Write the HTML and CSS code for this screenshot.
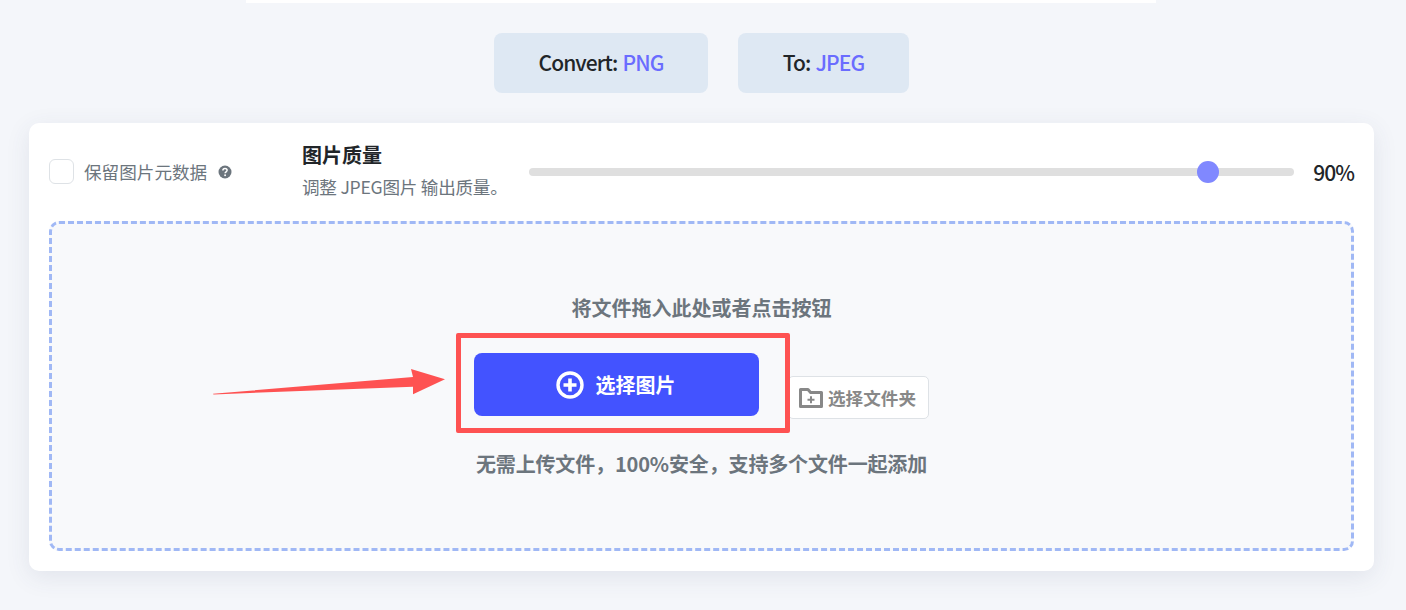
FILE: index.html
```html
<!DOCTYPE html>
<html lang="zh-CN">
<head>
<meta charset="utf-8">
<title>PNG to JPEG</title>
<link rel="stylesheet" href="styles.css">
</head>
<body>
<div class="top-strip"></div>
<div class="chips">
  <div class="chip chip-from">Convert: <span class="accent">PNG</span></div>
  <div class="chip chip-to">To: <span class="accent">JPEG</span></div>
</div>
<main class="card">
  <div class="settings">
    <label class="keep">
      <span class="checkbox"></span>
      <span class="keep-text">保留图片元数据</span>
      <svg class="help" viewBox="0 0 14 14" aria-hidden="true">
        <circle cx="7" cy="7" r="6.500" fill="#6c757d"/>
        <path d="M4.900 5.400C4.900 4.200 5.800 3.500 7 3.500s2.100.7 2.100 1.800c0 1.500-2 1.500-2 3" fill="none" stroke="#fff" stroke-width="1.500"/>
        <circle cx="7.100" cy="10.300" r=".95" fill="#fff"/>
      </svg>
    </label>
    <div class="quality">
      <div class="quality-title">图片质量</div>
      <div class="quality-sub">调整 JPEG图片 输出质量。</div>
    </div>
    <div class="slider"><span class="thumb"></span></div>
    <div class="percent">90%</div>
  </div>
  <section class="drop">
    <p class="drop-title">将文件拖入此处或者点击按钮</p>
    <div class="actions">
      <button class="primary">
        <svg class="plus" viewBox="0 0 28 28" aria-hidden="true">
          <circle cx="14" cy="14" r="12" fill="none" stroke="#fff" stroke-width="3.400"/>
          <path d="M14 7.500v13M7.500 14h13" stroke="#fff" stroke-width="3.600"/>
        </svg>
        选择图片
      </button>
      <button class="secondary">
        <svg class="folder" viewBox="0 0 24 20" aria-hidden="true">
          <path d="M1.500 1.500h7.500l2.600 3h10.900v14h-21z" fill="none" stroke="#888" stroke-width="3" stroke-linejoin="round"/>
          <path d="M12 8.200v7M8.500 11.700h7" stroke="#888" stroke-width="2"/>
        </svg>
        选择文件夹
      </button>
    </div>
    <p class="drop-hint">无需上传文件，100%安全，支持多个文件一起添加</p>
  </section>
</main>
<div class="mark-box"></div>
<svg class="mark-arrow" viewBox="0 0 240 30" aria-hidden="true">
  <path d="M0 26.800L.5 27.400L200 19.700L200 27.300L232 12.300L198 2L200 10Z" fill="#fe5252"/>
</svg>
</body>
</html>
```
FILE: styles.css
```css
* { box-sizing: border-box; }
html, body { margin: 0; height: 610px; overflow: hidden; }
body {
  position: relative;
  background: #f4f6fa;
  font-family: "Noto Sans CJK SC", "Noto Sans", sans-serif;
  color: #212529;
}
.top-strip { width: 910px; height: 3px; margin-left: 246px; background: #fff; }
.chips { display: flex; gap: 30px; margin: 30px 0 30px; padding-left: 494px; }
.chip {
  display: flex; align-items: center; justify-content: center; gap: 5px;
  height: 60px; padding-bottom: 2px; background: #dee8f3; border-radius: 8px;
  font-size: 21px; font-weight: 500; letter-spacing: -.9px;
}
.chip-from { width: 214px; }
.chip-to { width: 171px; }
.accent { color: #6a6cff; }
.card {
  width: 1345px; height: 448px; margin-left: 29px; padding: 16px 20px 19px;
  background: #fff; border-radius: 10px;
  box-shadow: 0 6px 24px rgba(60, 70, 110, .1);
}
.settings { display: flex; align-items: center; height: 65px; margin-bottom: 17px; }
.keep { display: flex; align-items: center; width: 253px; }
.checkbox { width: 25px; height: 25px; border: 1px solid #dee2e6; border-radius: 6px; background: #fff; }
.keep-text { margin-left: 10px; font-size: 17.600px; line-height: 24px; color: #6c757d; }
.help { width: 14px; height: 14px; margin-left: 11px; }
.quality { width: 227px; margin-bottom: 3px; }
.quality-title { font-size: 20px; font-weight: 700; line-height: 28px; color: #212529; }
.quality-sub { margin-top: 6px; font-size: 17.600px; line-height: 24px; letter-spacing: -.25px; color: #6c757d; white-space: nowrap; }
.slider {
  position: relative; width: 765px; height: 8px; margin-top: 1px;
  background: #dfdfdf; border-radius: 4px;
}
.thumb {
  position: absolute; left: 668px; top: -7px;
  width: 22px; height: 22px; border-radius: 50%; background: #8088ff;
}
.percent { width: 60px; text-align: right; font-size: 21px; font-weight: 500; letter-spacing: -1px; color: #212529; }
.drop {
  display: flex; flex-direction: column; align-items: center;
  width: 1305px; height: 330px; padding-top: 70px;
  background: #f8f9fb; border: 3px dashed #a0b8f5; border-radius: 10px;
}
.drop-title { margin: 0; font-size: 20px; font-weight: 700; line-height: 28px; color: #6c757d; }
.actions { display: flex; align-items: flex-end; gap: 29px; margin-top: 31px; }
.primary {
  display: flex; align-items: center; justify-content: center; gap: 12px;
  width: 285px; height: 63px; padding: 0 2px 0 0; border: 0; border-radius: 8px;
  background: #4353ff; color: #fff;
  font: 700 20px "Noto Sans CJK SC", sans-serif;
}
.plus { width: 28px; height: 28px; }
.secondary {
  display: flex; align-items: center; justify-content: flex-end; gap: 5px;
  width: 141px; height: 43px; padding: 0 12px 0 0; margin-bottom: -3px;
  background: #fff; border: 1px solid #dee2e6; border-radius: 5px;
  color: #888; font: 700 17.600px "Noto Sans CJK SC", sans-serif;
}
.folder { width: 24px; height: 20px; }
.drop-hint { margin: 34px 0 0; font-size: 20px; font-weight: 700; line-height: 28px; letter-spacing: -.15px; color: #6c757d; }
.mark-box {
  position: absolute; left: 456px; top: 333px;
  width: 334px; height: 100px;
  border: 5px solid #fe5252; border-radius: 2px;
}
.mark-arrow { position: absolute; left: 213px; top: 367px; width: 240px; height: 30px; }
```
